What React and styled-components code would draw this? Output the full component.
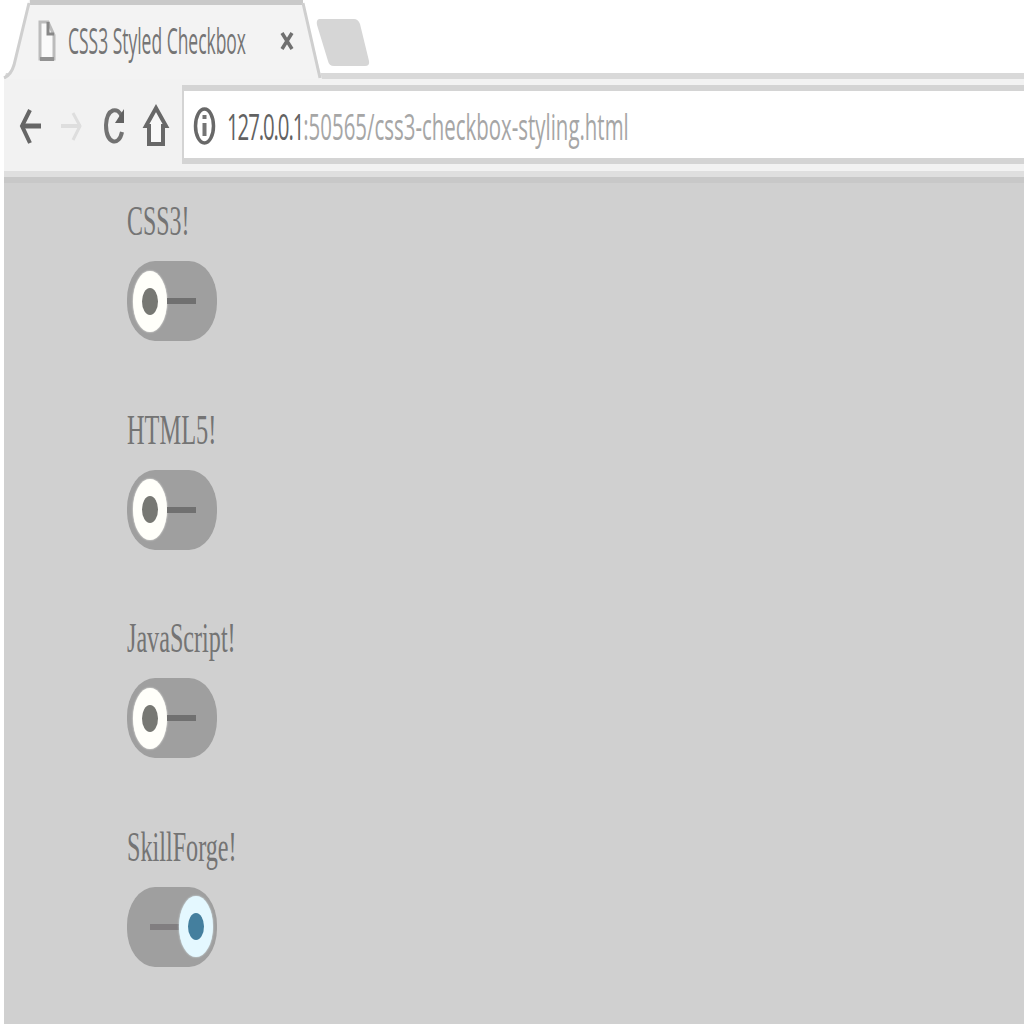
import React, { useState } from "react";
import styled, { createGlobalStyle } from "styled-components";

const GlobalStyle = createGlobalStyle`
  * { box-sizing: border-box; }
  body { margin: 0; background: #fff; overflow: hidden; }
`;

const Window = styled.div`
  display: flex;
  flex-direction: column;
  width: 1024px;
  height: 1024px;
  background: #fff;
`;

const TabStrip = styled.header`
  display: flex;
  flex-shrink: 0;
  height: 79px;
  background: linear-gradient(#fff 73px, #d9d9d9 73px);
`;

const Tab = styled.div`
  display: grid;
  width: 322px;
  height: 79px;
  > * { grid-area: 1 / 1; }
`;

const TabContent = styled.div`
  display: flex;
  align-items: center;
  height: 82px;
  padding-left: 37px;
`;

const TitleSlot = styled.div`
  width: 212px;
  margin-left: 12px;
`;

const Condensed = styled.span`
  display: block;
  width: max-content;
  white-space: nowrap;
  transform: scaleX(${(p) => p.$scale});
  transform-origin: left center;
`;

const Title = styled(Condensed)`
  font: 36px/44px "Open Sans", sans-serif;
  color: #757575;
`;

const Toolbar = styled.nav`
  display: flex;
  flex-shrink: 0;
  height: 92px;
  margin-left: 4px;
  padding: 6px 0 7px;
  background: #f2f2f2;
`;

const Buttons = styled.div`
  display: flex;
  align-items: center;
  width: 178px;
  padding: 2px 0 0 14px;
`;

const IconSlot = styled.span`
  display: flex;
  width: ${(p) => p.$width}px;
`;

const AddressBar = styled.div`
  display: flex;
  flex: 1;
  min-width: 0;
  align-items: center;
  padding: 2px 0 0 9px;
  background: #fff;
  border: solid #d4d4d4;
  border-width: 6px 0 6px 2px;
`;

const Url = styled(Condensed)`
  margin-left: 11px;
  font: 37px/44px "Open Sans", sans-serif;
  color: #a6a6a6;
`;

const Host = styled.span`
  letter-spacing: -2px;
  color: #626262;
`;

const Page = styled.main`
  flex: 1;
  min-height: 0;
  margin-left: 4px;
  padding: 26px 0 0 123px;
  overflow: hidden;
  background: linear-gradient(#dfdfdf 6px, #c8c8c8 6px, #c8c8c8 12px, #d0d0d0 12px);
`;

const Field = styled.label`
  display: flex;
  flex-direction: column;
  align-items: flex-start;
  height: 208.5px;
`;

const LabelText = styled(Condensed)`
  height: 64px;
  font: 42px/48px "Liberation Serif", serif;
  color: #747474;
`;

const HiddenInput = styled.input`
  display: none;
`;

const Track = styled.span`
  display: flex;
  flex-direction: ${(p) => (p.$on ? "row-reverse" : "row")};
  align-items: center;
  width: 90px;
  height: 80px;
  padding: 0 ${(p) => (p.$on ? 4 : 6)}px;
  border-radius: 28px / 38px;
  background: #9f9f9f;
`;

const Knob = styled.span`
  display: grid;
  place-items: center;
  width: 34px;
  height: 61px;
  border-radius: 50%;
  background: ${(p) => (p.$on ? "#e4f8ff" : "#fffffa")};
  box-shadow: 0 0 2px ${(p) => (p.$on ? "#e4f8ff" : "#fffffa")};
  &::after {
    content: "";
    width: 16px;
    height: 27px;
    border-radius: 50%;
    background: ${(p) => (p.$on ? "#447f9e" : "#777873")};
  }
`;

const Dash = styled.span`
  width: 29px;
  height: 6px;
  background: ${(p) => (p.$on ? "#817e80" : "#707070")};
`;

function Toggle({ label, scale, initial = false }) {
  const [on, setOn] = useState(initial);
  return (
    <Field>
      <LabelText $scale={scale}>{label}</LabelText>
      <HiddenInput type="checkbox" checked={on} onChange={() => setOn(!on)} />
      <Track $on={on}>
        <Knob $on={on} />
        <Dash $on={on} />
      </Track>
    </Field>
  );
}

export default function App() {
  return (
    <>
      <GlobalStyle />
      <Window>
        <TabStrip>
          <Tab>
            <svg width="322" height="79" viewBox="0 0 322 79">
              <path d="M0 0H30L4 79H0Z" fill="#fff" />
              <path d="M29 0H302L322 79H4L14 65Z" fill="#f3f3f3" />
              <path d="M30 0H303V5H30Z" fill="#c9c9c9" />
              <path d="M29 3L14 65Q11 75 4 78M303 3L320 78" fill="none" stroke="#cfcfcf" strokeWidth="3" />
            </svg>
            <TabContent>
              <svg width="19" height="44" viewBox="0 0 19 44" fill="none">
                <path d="M3 3H11L17 16V40H3Z" fill="#fafafa" stroke="#bcbcbc" strokeWidth="3" />
                <path d="M11 3V15H17" stroke="#888" strokeWidth="3" />
                <path d="M3 40H17" stroke="#929292" strokeWidth="4" />
              </svg>
              <TitleSlot>
                <Title $scale={0.485}>CSS3 Styled Checkbox</Title>
              </TitleSlot>
              <svg width="14" height="20" viewBox="0 0 14 20">
                <path d="M2 2L12 18M12 2L2 18" stroke="#707070" strokeWidth="3.5" />
              </svg>
            </TabContent>
          </Tab>
          <svg width="50" height="79" viewBox="322 0 50 79" overflow="visible">
            <path d="M319 19H354Q358 19 360 24L369 61Q370 66 365 66H334Q329 66 328 61L317 25Q316 20 319 19Z" fill="#d6d6d6" />
          </svg>
        </TabStrip>
        <Toolbar>
          <Buttons>
            <IconSlot $width={43}>
              <svg width="24" height="40" viewBox="0 0 24 40" fill="none" stroke="#666">
                <path d="M3 20H23" strokeWidth="5" />
                <path d="M12 4L4 20L12 37" strokeWidth="4" />
              </svg>
            </IconSlot>
            <IconSlot $width={41}>
              <svg width="22" height="40" viewBox="0 0 22 40" fill="none" stroke="#dedede">
                <path d="M0 20H20" strokeWidth="4" />
                <path d="M12 7L19 20L12 34" strokeWidth="3" />
              </svg>
            </IconSlot>
            <IconSlot $width={40}>
              <svg width="24" height="42" viewBox="0 0 24 42" fill="none" stroke="#727272">
                <path d="M20 12C16 1 5 3 4 20C4 39 17 42 20 27" strokeWidth="4" />
                <path d="M22 4V18H13Z" fill="#626262" stroke="none" />
              </svg>
            </IconSlot>
            <svg width="28" height="46" viewBox="0 0 28 46">
              <path d="M4 23L14 5L24 23H21V41H7V23Z" fill="#f8f8f8" stroke="#686868" strokeWidth="4" />
            </svg>
          </Buttons>
          <AddressBar>
            <svg width="23" height="44" viewBox="0 0 23 44" fill="none">
              <ellipse cx="11.5" cy="22" rx="9" ry="17" stroke="#686868" strokeWidth="3.5" />
              <path d="M11.5 19V32M11.5 11V15" stroke="#747474" strokeWidth="4" />
            </svg>
            <Url $scale={0.552}>
              <Host>127.0.0.1</Host>:50565/css3-checkbox-styling.html
            </Url>
          </AddressBar>
        </Toolbar>
        <Page>
          <Toggle label="CSS3!" scale={0.57} />
          <Toggle label="HTML5!" scale={0.58} />
          <Toggle label="JavaScript!" scale={0.575} />
          <Toggle label="SkillForge!" scale={0.575} initial />
        </Page>
      </Window>
    </>
  );
}
